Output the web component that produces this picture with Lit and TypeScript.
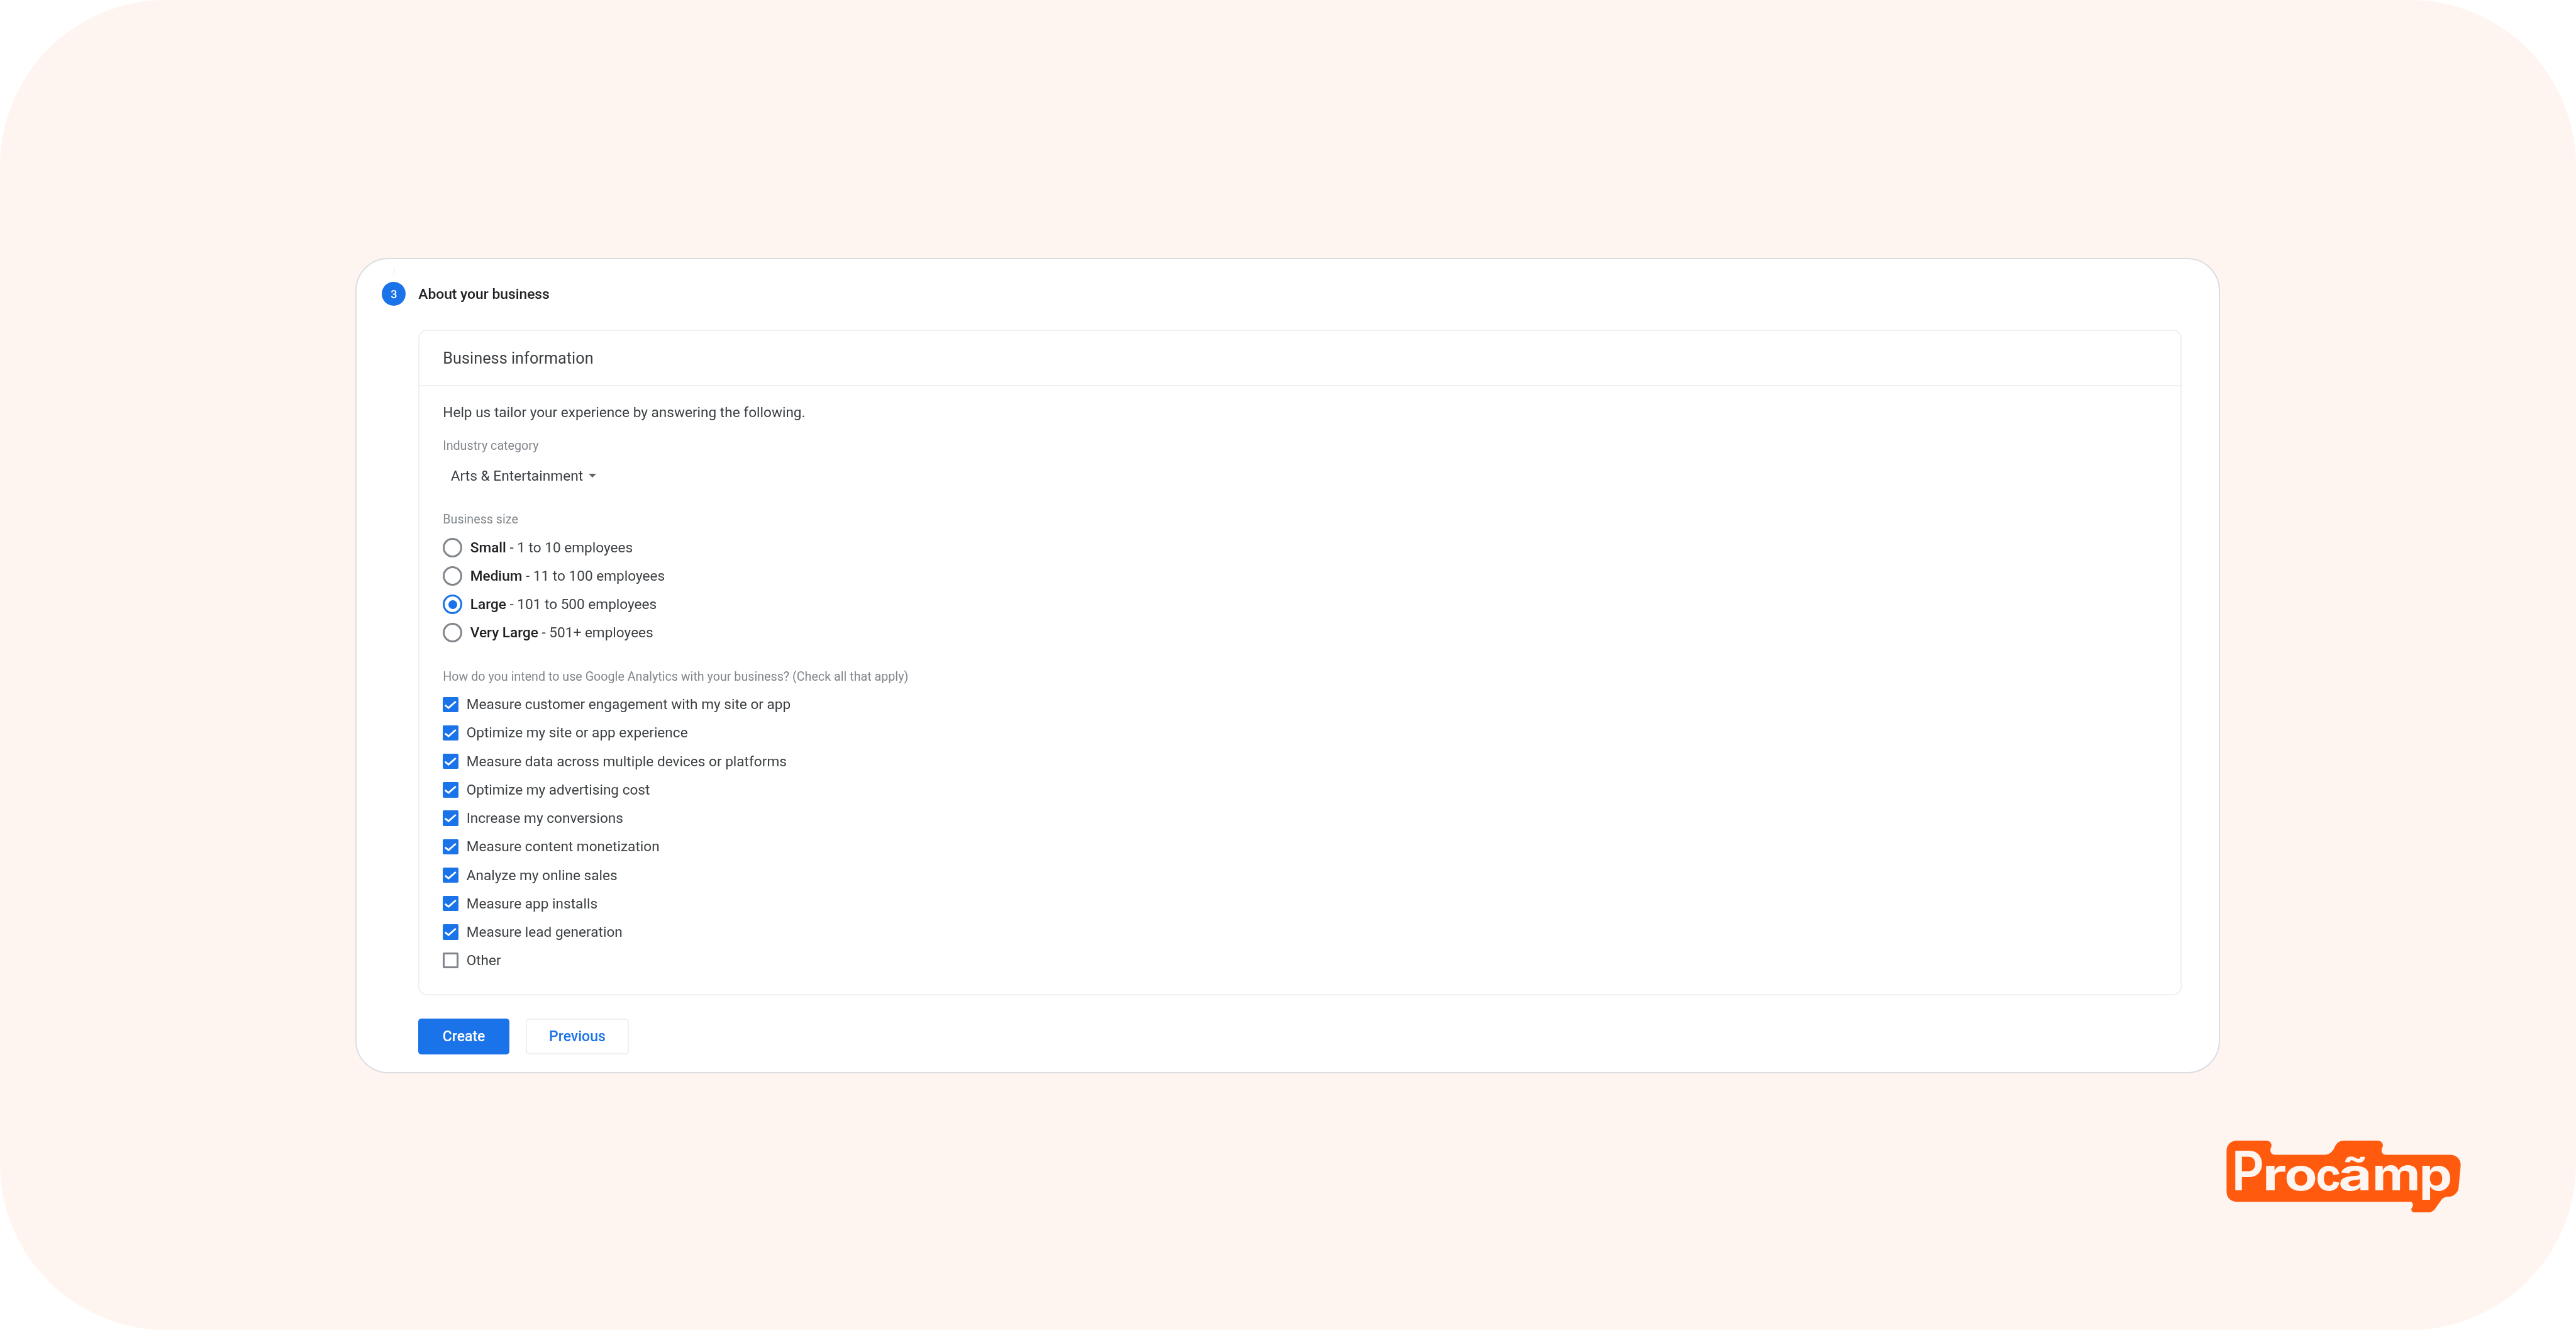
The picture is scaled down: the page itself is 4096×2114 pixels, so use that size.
import { LitElement, html, css, svg } from "lit";
import { customElement } from "lit/decorators.js";

const SIZES: [string, string, boolean][] = [
  ["Small", " - 1 to 10 employees", false],
  ["Medium", " - 11 to 100 employees", false],
  ["Large", " - 101 to 500 employees", true],
  ["Very Large", " - 501+ employees", false],
];

const USES: [string, boolean][] = [
  ["Measure customer engagement with my site or app", true],
  ["Optimize my site or app experience", true],
  ["Measure data across multiple devices or platforms", true],
  ["Optimize my advertising cost", true],
  ["Increase my conversions", true],
  ["Measure content monetization", true],
  ["Analyze my online sales", true],
  ["Measure app installs", true],
  ["Measure lead generation", true],
  ["Other", false],
];

const LOGO_PATH =
  "M5359.6 2770 C5359.6 2755 5370 2745 5385.3 2745 L5456 2745 C5465 2745 5470 2755 5467 2760 C5463 2768 5465 2779 5477 2779 L5595 2779 C5608 2779 5616 2770 5620 2760 C5625 2750 5632 2745 5642 2745 L5724 2745 C5733 2745 5738 2755 5735 2760 C5730 2770 5733 2779 5744 2779 L5897 2779 C5913 2779 5924 2790 5923 2805 L5918 2858 C5917 2870 5906 2880 5893 2880 C5885 2880 5878 2884 5875 2890 L5862 2908 C5858 2914 5852 2917.7 5844 2917.7 L5812 2917.7 C5805 2917.7 5802 2910 5806 2906 C5810 2900 5808 2892.3 5802 2892.3 L5385 2892.3 C5370 2892.3 5359.6 2882 5359.6 2868 Z";

@customElement("app-root")
export class AppRoot extends LitElement {
  static styles = css`
    :host {
      display: block;
      background: #ffffff;
      font-family: Roboto, "Liberation Sans", sans-serif;
    }
    .page {
      box-sizing: border-box;
      height: 2114px;
      padding: 410px 183px 0 564.8px;
      background: #fff5f0;
      border-radius: 264px;
      display: flex;
      flex-direction: column;
    }
    .card {
      box-sizing: border-box;
      width: 2965.7px;
      height: 1295.6px;
      padding: 36px 59.5px 0 98.2px;
      background: #fff;
      border: 2px solid #dcdde2;
      border-radius: 52px;
      align-self: flex-start;
    }
    .soft {
      filter: blur(0.75px);
    }
    .head {
      display: flex;
      align-items: center;
      height: 38px;
      margin-left: -57.5px;
      gap: 19.8px;
    }
    .step {
      position: relative;
      width: 38px;
      height: 38px;
      border-radius: 50%;
      background: #1a73e8;
      color: #fff;
      font-size: 18px;
      font-weight: 500;
      display: flex;
      align-items: center;
      justify-content: center;
      flex: none;
    }
    .step::before {
      content: "";
      position: absolute;
      left: 18.5px;
      top: -22px;
      width: 1px;
      height: 10px;
      background: #dadce0;
    }
    .head-title {
      font-size: 22.8px;
      font-weight: 500;
      color: #202124;
    }
    .panel {
      margin-top: 38px;
      height: 1058px;
      box-sizing: border-box;
      border: 2px solid #eff0f2;
      border-radius: 14px;
    }
    .panel-head {
      box-sizing: border-box;
      height: 88px;
      padding-left: 37.3px;
      display: flex;
      align-items: center;
      border-bottom: 2px solid #eff0f2;
      font-size: 25.3px;
      color: #3c4043;
    }
    .panel-body {
      padding: 27px 37.3px 0;
    }
    .help {
      height: 30px;
      line-height: 30px;
      font-size: 22.6px;
      color: #3c4043;
    }
    .label {
      height: 24px;
      line-height: 24px;
      font-size: 19.7px;
      color: #80868b;
    }
    .label-industry {
      margin-top: 25.9px;
    }
    .label-size {
      margin-top: 38.1px;
    }
    .label-use {
      margin-top: 36.2px;
    }
    .select {
      margin-top: 15.5px;
      height: 40px;
      padding-left: 12.5px;
      display: flex;
      align-items: center;
      gap: 9px;
      font-size: 22.7px;
      color: #3c4043;
    }
    .caret {
      width: 0;
      height: 0;
      border-left: 6px solid transparent;
      border-right: 6px solid transparent;
      border-top: 6px solid #5f6368;
    }
    .radios {
      margin-top: 9.7px;
    }
    .radio-row {
      height: 44.95px;
      display: flex;
      align-items: center;
      gap: 12.5px;
      font-size: 22.6px;
      color: #3c4043;
    }
    .radio-row b {
      font-weight: 500;
      color: #202124;
    }
    .radio {
      box-sizing: border-box;
      width: 31px;
      height: 31px;
      border: 3px solid #80868b;
      border-radius: 50%;
      display: flex;
      align-items: center;
      justify-content: center;
      flex: none;
    }
    .radio.on {
      border-color: #1a73e8;
    }
    .radio.on::after {
      content: "";
      width: 14px;
      height: 14px;
      border-radius: 50%;
      background: #1a73e8;
    }
    .checks {
      margin-top: 9px;
    }
    .check-row {
      height: 45.22px;
      display: flex;
      align-items: center;
      gap: 13px;
      font-size: 22.6px;
      color: #3c4043;
    }
    .box {
      box-sizing: border-box;
      width: 24.4px;
      height: 24.4px;
      border-radius: 2px;
      background: #1a73e8;
      flex: none;
      display: flex;
    }
    .box.off {
      background: #fff;
      border: 3px solid #80868b;
    }
    .box svg {
      width: 100%;
      height: 100%;
    }
    .actions {
      display: flex;
      gap: 25.4px;
      margin-top: 37.3px;
    }
    .btn {
      box-sizing: border-box;
      height: 57px;
      border-radius: 5px;
      display: flex;
      align-items: center;
      justify-content: center;
      font-size: 23px;
      font-weight: 500;
    }
    .primary {
      width: 145.3px;
      background: #1a73e8;
      color: #fff;
    }
    .secondary {
      width: 164.5px;
      background: #fff;
      color: #1a73e8;
      border: 2px solid #eff0f2;
    }
    .logo-row {
      display: flex;
      justify-content: flex-end;
      margin-top: 107.9px;
    }
    .logo {
      width: 372.6px;
      height: 115px;
      display: block;
    }
    .logo-text {
      font-family: Inter, Lato, sans-serif;
      font-weight: 700;
      fill: #fff5f0;
    }
    .logo-cap {
      font-weight: 600;
    }
  `;

  private logo() {
    return svg`
      <path d=${LOGO_PATH} fill="#ff5a0d"></path>
      <text class="logo-text" y="2864.3" font-size="108"><tspan class="logo-cap" x="5372" font-size="132" textLength="78" lengthAdjust="spacingAndGlyphs">P</tspan><tspan x="5446" textLength="57.5" lengthAdjust="spacingAndGlyphs">r</tspan><tspan x="5499" textLength="79" lengthAdjust="spacingAndGlyphs">o</tspan><tspan x="5574.4" textLength="60.5" lengthAdjust="spacingAndGlyphs">c</tspan><tspan x="5629" textLength="81" lengthAdjust="spacingAndGlyphs">ã</tspan><tspan x="5710" textLength="116.5" lengthAdjust="spacingAndGlyphs">m</tspan><tspan x="5823" textLength="80" lengthAdjust="spacingAndGlyphs">p</tspan></text>
    `;
  }

  render() {
    return html`
      <div class="page">
        <div class="card">
          <div class="head soft">
            <div class="step">3</div>
            <div class="head-title">About your business</div>
          </div>
          <div class="panel">
            <div class="panel-head"><span class="soft">Business information</span></div>
            <div class="panel-body soft">
              <div class="help">Help us tailor your experience by answering the following.</div>
              <div class="label label-industry">Industry category</div>
              <div class="select"><span>Arts &amp; Entertainment</span><span class="caret"></span></div>
              <div class="label label-size">Business size</div>
              <div class="radios">
                ${SIZES.map(
                  ([name, rest, on]) => html`
                    <div class="radio-row">
                      <span class="radio ${on ? "on" : ""}"></span>
                      <span><b>${name}</b>${rest}</span>
                    </div>
                  `
                )}
              </div>
              <div class="label label-use">How do you intend to use Google Analytics with your business? (Check all that apply)</div>
              <div class="checks">
                ${USES.map(
                  ([text, on]) => html`
                    <div class="check-row">
                      <span class="box ${on ? "" : "off"}">
                        ${on
                          ? html`<svg viewBox="0 0 37 37"><path d="M5.5 19.5 L14 26 L31.5 10.5" fill="none" stroke="#fff" stroke-width="4.2"></path></svg>`
                          : ""}
                      </span>
                      <span>${text}</span>
                    </div>
                  `
                )}
              </div>
            </div>
          </div>
          <div class="actions soft">
            <div class="btn primary">Create</div>
            <div class="btn secondary">Previous</div>
          </div>
        </div>
        <div class="logo-row">
          <svg class="logo" viewBox="5359 2745 564 174">${this.logo()}</svg>
        </div>
      </div>
    `;
  }
}
